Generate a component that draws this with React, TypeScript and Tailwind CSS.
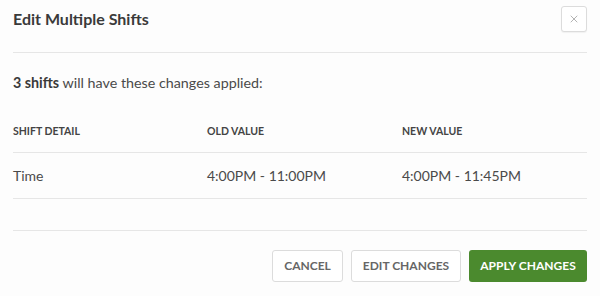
import { X } from "lucide-react";

const rows = [{ detail: "Time", oldValue: "4:00PM - 11:00PM", newValue: "4:00PM - 11:45PM" }];

export default function App() {
  return (
    <div
      className="w-[600px] h-[296px] bg-[#fdfdfd] text-[#4a4a4a] px-[13px] overflow-hidden"
      style={{ fontFamily: "Lato, 'Open Sans', sans-serif" }}
    >
      <div className="flex items-start justify-between h-[53px] border-b border-[#e6e6e6]">
        <h2 className="pt-[8px] text-[16px] font-bold text-[#3a3a3a] leading-[22px]">Edit Multiple Shifts</h2>
        <button className="mt-[6px] w-[26px] h-[26px] flex items-center justify-center border border-[#dcdcdc] rounded-[3px] bg-white shadow-[0_1px_1px_rgba(0,0,0,0.05)]">
          <X size={12} strokeWidth={1.5} className="text-[#999]" />
        </button>
      </div>

      <p className="mt-[20px] text-[14.3px] leading-[20px]">
        <span className="font-bold text-[#3a3a3a]">3 shifts</span> will have these changes applied:
      </p>

      <div className="mt-[19px]">
        <div className="grid grid-cols-[194px_195px_1fr] text-[10.5px] font-bold text-[#444] h-[41px] items-center border-b border-[#e6e6e6]">
          <span>SHIFT DETAIL</span>
          <span>OLD VALUE</span>
          <span>NEW VALUE</span>
        </div>
        {rows.map((row) => (
          <div key={row.detail} className="grid grid-cols-[194px_195px_1fr] text-[14px] h-[46px] items-center border-b border-[#e6e6e6]">
            <span>{row.detail}</span>
            <span>{row.oldValue}</span>
            <span>{row.newValue}</span>
          </div>
        ))}
      </div>

      <div className="mt-[31px] border-t border-[#e6e6e6] pt-[19px] flex justify-end gap-[8px]">
        <button className="h-[32px] w-[71px] border border-[#dcdcdc] rounded-[3px] bg-white text-[12px] font-bold text-[#666]">
          CANCEL
        </button>
        <button className="h-[32px] w-[110px] border border-[#dcdcdc] rounded-[3px] bg-white text-[12px] font-bold text-[#666]">
          EDIT CHANGES
        </button>
        <button className="h-[32px] w-[118px] rounded-[3px] bg-[#4b8a2e] text-[12px] font-bold text-white">
          APPLY CHANGES
        </button>
      </div>
    </div>
  );
}
